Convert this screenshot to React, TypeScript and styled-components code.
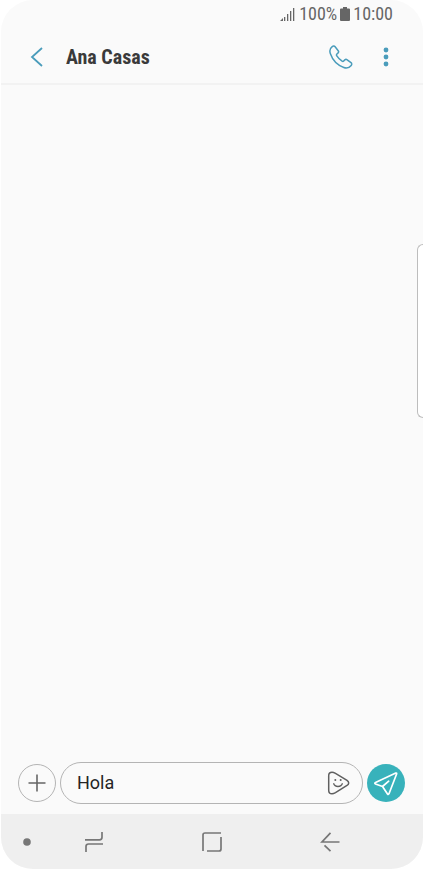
import React, { useState } from "react";
import styled, { createGlobalStyle } from "styled-components";

const GlobalStyle = createGlobalStyle`
  * { box-sizing: border-box; }
  body { margin: 0; background: #ffffff; }
  button, input { font: inherit; color: inherit; }
`;

const condensed = `"Roboto Condensed", "Liberation Sans Narrow", Roboto, sans-serif`;

const Page = styled.div`
  padding: 0 0 1px 1px;
`;

const Screen = styled.div`
  position: relative;
  display: flex;
  flex-direction: column;
  min-height: calc(100vh - 1px);
  overflow: hidden;
  border-radius: 32px;
  background: #fafafa;
  color: #252525;
  font-family: Roboto, sans-serif;
`;

const StatusBar = styled.div`
  display: flex;
  align-items: center;
  justify-content: flex-end;
  gap: 3px;
  height: 28px;
  padding-right: 30px;
  color: #666666;
  font-family: ${condensed};
  font-size: 18px;
  line-height: 28px;
`;

const Header = styled.header`
  display: flex;
  align-items: center;
  height: 57px;
  padding: 2px 20px 0 19px;
  border-bottom: 2px solid #f2f2f2;
`;

const Title = styled.h1`
  flex: 1;
  margin: 0;
  padding-left: 12px;
  color: #3a3a3a;
  font-family: ${condensed};
  font-size: 20px;
  font-weight: 700;
  line-height: 24px;
`;

const IconButton = styled.button<{ $wide?: boolean }>`
  display: flex;
  align-items: center;
  justify-content: center;
  width: ${(p) => (p.$wide ? "56px" : "34px")};
  height: 40px;
  padding: 0;
  border: 0;
  background: none;
  color: #4a9cbb;
`;

const Messages = styled.main`
  flex: 1;
`;

const EdgeHandle = styled.div`
  position: absolute;
  top: 244px;
  right: 0;
  width: 6px;
  height: 174px;
  border: 1px solid #bdbdbd;
  border-right: 0;
  border-radius: 6px 0 0 6px;
  background: #ffffff;
`;

const Composer = styled.form`
  display: flex;
  align-items: center;
  gap: 4px;
  padding: 0 18px 10px 17px;
`;

const RoundButton = styled.button<{ $filled?: boolean }>`
  display: flex;
  flex: none;
  align-items: center;
  justify-content: center;
  width: 38px;
  height: 38px;
  padding: 0;
  border: ${(p) => (p.$filled ? "0" : "1px solid #b4b4b4")};
  border-radius: 50%;
  background: ${(p) => (p.$filled ? "#38b2bb" : "transparent")};
  color: ${(p) => (p.$filled ? "#ffffff" : "#666666")};
`;

const Field = styled.div`
  display: flex;
  flex: 1;
  align-items: center;
  min-width: 0;
  height: 42px;
  padding: 0 6px 0 16px;
  border: 1px solid #b4b4b4;
  border-radius: 21px;
`;

const TextInput = styled.input`
  flex: 1;
  min-width: 0;
  padding: 0;
  border: 0;
  outline: 0;
  background: none;
  font-size: 18px;
  line-height: 24px;
`;

const StickerButton = styled(IconButton)`
  color: #606060;
`;

const NavBar = styled.nav`
  display: grid;
  grid-template-columns: 34px 1fr 1fr 1fr 34px;
  height: 55px;
  background: #efefef;
`;

const NavButton = styled.button<{ $dot?: boolean }>`
  display: flex;
  align-items: center;
  justify-content: ${(p) => (p.$dot ? "flex-end" : "center")};
  padding: ${(p) => (p.$dot ? "0 4px 0 0" : "0")};
  border: 0;
  background: none;
  color: #777777;
`;

const SignalIcon = () => (
  <svg width="16" height="14" viewBox="0 0 16 14" fill="currentColor" aria-hidden="true">
    <path d="M0 14l3-3v3zM4 10h1.300v4H4zM7 7h1.300v7H7zM10 4h1.300v10H10zM13 1h1.300v13H13z" />
  </svg>
);

const BatteryIcon = () => (
  <svg width="10" height="16" viewBox="0 0 10 16" fill="currentColor" aria-hidden="true">
    <path d="M3 1h4v1.500h2q1 0 1 1V14q0 1-1 1H1q-1 0-1-1V3.500q0-1 1-1h2z" />
  </svg>
);

const BackIcon = () => (
  <svg width="14" height="22" viewBox="0 0 14 22" fill="none" stroke="currentColor" strokeWidth="1.800" aria-hidden="true">
    <path d="M12 2L2 11l10 9" />
  </svg>
);

const PhoneIcon = () => (
  <svg width="24" height="24" viewBox="0 0 24 24" fill="none" stroke="currentColor" strokeWidth="1.500" strokeLinejoin="round" aria-hidden="true">
    <path d="M3.200 1.600C4.200.8 5.400.9 6.100 1.800L9.200 5.700C9.800 6.500 9.700 7.400 8.900 8.100L7.900 9C7.300 9.600 7.400 10.200 7.800 10.800C9.200 12.900 11 14.700 13.100 16.200C13.700 16.600 14.200 16.600 14.700 16L15.800 14.900C16.500 14.200 17.400 14.200 18.200 14.800L22 17.700C22.900 18.400 23 19.500 22.200 20.400C20.300 22.700 17.600 23.500 14.800 22.500C8.600 20.200 3.400 14.600 1.300 8.500C.4 5.800 1 3.300 3.200 1.600Z" />
  </svg>
);

const MoreIcon = () => (
  <svg width="6" height="20" viewBox="0 0 6 20" fill="currentColor" aria-hidden="true">
    <circle cx="3" cy="3" r="2.400" />
    <circle cx="3" cy="10" r="2.400" />
    <circle cx="3" cy="17" r="2.400" />
  </svg>
);

const PlusIcon = () => (
  <svg width="18" height="18" viewBox="0 0 18 18" fill="none" stroke="currentColor" strokeWidth="1.600" aria-hidden="true">
    <path d="M9 .5v17M.5 9h17" />
  </svg>
);

const StickerIcon = () => (
  <svg width="24" height="24" viewBox="0 0 24 24" fill="none" stroke="currentColor" strokeWidth="1.500" aria-hidden="true">
    <path d="M1.700 4.500Q1.700 1.200 5 1.200Q6.500 1.200 8.500 2.300L20 9.300Q23.400 12 20 14.500L8.500 21.700Q6.500 22.800 5 22.800Q1.700 22.800 1.700 19.500Z" />
    <path d="M6.500 12.300Q7.500 15.500 11 15.500T15.500 12.300" strokeWidth="1.300" />
    <circle cx="8.300" cy="9" r="1" fill="currentColor" stroke="none" />
    <circle cx="13.700" cy="9" r="1" fill="currentColor" stroke="none" />
  </svg>
);

const SendIcon = () => (
  <svg width="26" height="26" viewBox="0 0 26 26" fill="none" stroke="currentColor" strokeWidth="1.700" strokeLinejoin="round" strokeLinecap="round" aria-hidden="true">
    <path d="M22.800 3.100Q23.900 2.800 23.600 4L16 23.700Q15.300 25 14.500 23.900L9.500 16.500L2.500 14Q1.100 13.200 2.500 12.400ZM9.500 16.500L15.700 11.200" />
  </svg>
);

const RecentsIcon = () => (
  <svg width="20" height="22" viewBox="0 0 20 22" fill="none" stroke="currentColor" strokeWidth="1.700" aria-hidden="true">
    <path d="M1 8.800h14.500q2.500 0 2.500-2.500V1M19 13H4.500Q2 13 2 15.500V21" />
  </svg>
);

const HomeIcon = () => (
  <svg width="20" height="20" viewBox="0 0 20 20" fill="none" stroke="currentColor" strokeWidth="1.700" aria-hidden="true">
    <path d="M1 19V3q0-2 2-2h16M5 19h12q2 0 2-2V5" />
  </svg>
);

const NavBackIcon = () => (
  <svg width="20" height="20" viewBox="0 0 20 20" fill="none" stroke="currentColor" strokeWidth="1.700" aria-hidden="true">
    <path d="M10.500 .8L2 10H19.500M4.500 13.300L10.500 19.200" />
  </svg>
);

const DotIcon = () => (
  <svg width="8" height="8" viewBox="0 0 8 8" fill="currentColor" aria-hidden="true">
    <circle cx="4" cy="4" r="3.800" />
  </svg>
);

export default function App() {
  const [message, setMessage] = useState("Hola");

  return (
    <Page>
      <GlobalStyle />
      <Screen>
        <StatusBar>
          <SignalIcon />
          <span>100%</span>
          <BatteryIcon />
          <time>10:00</time>
        </StatusBar>
        <Header>
          <IconButton aria-label="Atrás"><BackIcon /></IconButton>
          <Title>Ana Casas</Title>
          <IconButton $wide aria-label="Llamar"><PhoneIcon /></IconButton>
          <IconButton aria-label="Más opciones"><MoreIcon /></IconButton>
        </Header>
        <Messages />
        <Composer onSubmit={(e) => e.preventDefault()}>
          <RoundButton type="button" aria-label="Adjuntar"><PlusIcon /></RoundButton>
          <Field>
            <TextInput aria-label="Mensaje" value={message} onChange={(e) => setMessage(e.target.value)} />
            <StickerButton type="button" aria-label="Stickers"><StickerIcon /></StickerButton>
          </Field>
          <RoundButton $filled type="submit" aria-label="Enviar"><SendIcon /></RoundButton>
        </Composer>
        <NavBar>
          <NavButton $dot aria-label="Ocultar barra"><DotIcon /></NavButton>
          <NavButton aria-label="Recientes"><RecentsIcon /></NavButton>
          <NavButton aria-label="Inicio"><HomeIcon /></NavButton>
          <NavButton aria-label="Volver"><NavBackIcon /></NavButton>
        </NavBar>
        <EdgeHandle />
      </Screen>
    </Page>
  );
}
